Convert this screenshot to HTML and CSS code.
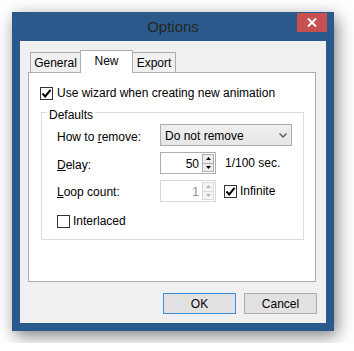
FILE: index.html
```html
<!DOCTYPE html>
<html>
<head>
<meta charset="utf-8">
<title>Options</title>
<link rel="stylesheet" href="styles.css">
</head>
<body>
<div class="stage">
  <div class="window">
    <div class="titlebar">
      <span class="title">Options</span>
      <button class="close" aria-label="Close">
        <svg width="10" height="9" viewBox="0 0 10 9"><path d="M1 0.5 L9 8.5 M9 0.5 L1 8.5" stroke="#fff" stroke-width="2" fill="none"/></svg>
      </button>
    </div>
    <div class="client">
      <div class="tabs">
        <div class="tab tab-general">General</div>
        <div class="tab tab-new active">New</div>
        <div class="tab tab-export">Export</div>
      </div>
      <div class="panel">
        <label class="check-row wizard">
          <span class="cb"><svg width="11" height="11" viewBox="0 0 11 11"><path d="M1.5 5.5 L4.2 8.4 L9.6 1.8" stroke="#000" stroke-width="2" fill="none"/></svg></span>
          Use wizard when creating new animation
        </label>
        <fieldset class="group">
          <legend>Defaults</legend>
          <div class="form">
            <div class="lbl lbl-remove">How to <u>r</u>emove:</div>
            <div class="ctl">
              <div class="select">
                <span class="select-text">Do not remove</span>
                <svg width="8" height="5" viewBox="0 0 8 5"><path d="M0.5 0.5 L4 4 L7.5 0.5" stroke="#5a5a5a" stroke-width="1.4" fill="none"/></svg>
              </div>
            </div>

            <div class="lbl lbl-delay"><u>D</u>elay:</div>
            <div class="ctl">
              <div class="spin">
                <span class="spin-val">50</span>
                <span class="spin-btns">
                  <span class="sb up"><svg width="5" height="3" viewBox="0 0 5 3"><path d="M0 3 L2.5 0 L5 3 Z" fill="#000"/></svg></span>
                  <span class="sb down"><svg width="5" height="3" viewBox="0 0 5 3"><path d="M0 0 L2.5 3 L5 0 Z" fill="#000"/></svg></span>
                </span>
              </div>
              <span class="unit">1/100 sec.</span>
            </div>

            <div class="lbl lbl-loop"><u>L</u>oop count:</div>
            <div class="ctl">
              <div class="spin disabled">
                <span class="spin-val">1</span>
                <span class="spin-btns">
                  <span class="sb up"><svg width="5" height="3" viewBox="0 0 5 3"><path d="M0 3 L2.5 0 L5 3 Z" fill="#b4b4b4"/></svg></span>
                  <span class="sb down"><svg width="5" height="3" viewBox="0 0 5 3"><path d="M0 0 L2.5 3 L5 0 Z" fill="#b4b4b4"/></svg></span>
                </span>
              </div>
              <label class="check-row infinite">
                <span class="cb"><svg width="11" height="11" viewBox="0 0 11 11"><path d="M1.5 5.5 L4.2 8.4 L9.6 1.8" stroke="#000" stroke-width="2" fill="none"/></svg></span>
                Infinite
              </label>
            </div>

            <label class="check-row interlaced">
              <span class="cb"></span>
              Interlaced
            </label>
          </div>
        </fieldset>
      </div>
      <div class="buttons">
        <button class="btn btn-default">OK</button>
        <button class="btn">Cancel</button>
      </div>
    </div>
  </div>
</div>
</body>
</html>
```

FILE: styles.css
```css
* { box-sizing: border-box; }

body {
  margin: 0;
  background: #ffffff;
  font-family: "Liberation Sans", Arial, sans-serif;
  font-size: 12px;
  line-height: 16px;
  color: #000;
}

.stage {
  padding: 12px;
}

.window {
  width: 322px;
  height: 319px;
  background: #2a5a8b;
  padding: 0 8px 8px;
  display: flex;
  flex-direction: column;
  box-shadow: 3px 5px 16px rgba(0, 0, 0, 0.5);
}

.titlebar {
  height: 29px;
  position: relative;
  display: flex;
  align-items: center;
  justify-content: center;
}

.title {
  font-size: 15px;
  color: #262626;
}

.close {
  position: absolute;
  top: 1px;
  right: -1px;
  width: 30px;
  height: 19px;
  border: 0;
  padding: 0;
  background: #c75050;
  display: flex;
  align-items: center;
  justify-content: center;
}

.client {
  flex: 1;
  background: #f0f0f0;
  padding: 9px 10px 0 8px;
  display: flex;
  flex-direction: column;
}

.tabs {
  display: flex;
  align-items: flex-end;
  height: 23px;
  padding-left: 2px;
  margin-bottom: -1px;
  position: relative;
  z-index: 1;
}

.tab {
  height: 20px;
  margin-bottom: 1px;
  border: 1px solid #adadad;
  border-bottom: 0;
  background: #f0f0f0;
  display: flex;
  align-items: center;
  justify-content: center;
  padding-top: 1px;
}

.tab-general { width: 51px; }
.tab-export { width: 44px; margin-left: -1px; }

.tab.active {
  width: 53px;
  height: 23px;
  margin-left: -1px;
  margin-bottom: 0;
  padding-top: 0;
  padding-bottom: 2px;
  background: #fff;
  position: relative;
  z-index: 2;
}

.panel {
  height: 210px;
  border: 1px solid #adadad;
  background: #fff;
  padding: 12px 0 0 11px;
}

.check-row {
  display: flex;
  align-items: center;
  gap: 3px;
  height: 16px;
  white-space: nowrap;
}

.check-row.wizard { gap: 4px; }

.cb {
  width: 13px;
  height: 13px;
  border: 1px solid #333;
  background: #fff;
  display: flex;
  align-items: center;
  justify-content: center;
  flex: none;
}

.group {
  margin: 3px 11px 0 1px;
  height: 136px;
  border: 1px solid #dcdcdc;
  padding: 4px 0 0 15px;
  min-width: 0;
}

.group legend {
  padding: 6px 2px 0;
  margin-left: -10px;
  line-height: 10px;
}

.form {
  display: grid;
  grid-template-columns: 103px auto;
  grid-template-rows: 22px 22px 22px auto;
  row-gap: 6px;
}

.lbl {
  white-space: nowrap;
}
.lbl-remove { padding-top: 5px; }
.lbl-delay { padding-top: 5px; }
.lbl-loop { padding-top: 4px; }

.ctl {
  display: flex;
  align-items: center;
}

.select {
  width: 132px;
  height: 22px;
  border: 1px solid #acacac;
  background: linear-gradient(#efefef, #e5e5e5);
  display: flex;
  align-items: center;
  justify-content: space-between;
  padding: 1px 4px 0 4px;
}

.spin {
  width: 56px;
  height: 22px;
  border: 1px solid #abadb3;
  background: #fff;
  display: flex;
  align-items: stretch;
  padding: 1px 1px 1px 0;
}

.spin-val {
  flex: 1;
  text-align: right;
  padding-right: 3px;
  align-self: center;
  padding-top: 1px;
}

.spin-btns {
  width: 12px;
  display: flex;
  flex-direction: column;
}

.sb {
  height: 10px;
  border: 1px solid #acacac;
  background: #ececec;
  display: flex;
  align-items: center;
  justify-content: center;
}

.sb.down { margin-top: -1px; }

.spin.disabled { border-color: #d9d9d9; }
.spin.disabled .spin-val { color: #8c8c8c; }
.spin.disabled .sb { border-color: #dadada; background: #f4f4f4; }

.unit {
  margin-left: 9px;
  white-space: nowrap;
}

.check-row.infinite {
  margin-left: 8px;
}

.check-row.interlaced {
  grid-column: 1 / 3;
  margin-top: 5px;
}

.buttons {
  display: flex;
  justify-content: flex-end;
  gap: 8px;
  margin-top: 11px;
  margin-right: -1px;
}

.btn {
  width: 73px;
  height: 21px;
  border: 1px solid #adadad;
  background: #e1e1e1;
  font: inherit;
  color: #000;
  padding: 0;
}

.btn-default {
  border-color: #3c8fe0;
}
```
